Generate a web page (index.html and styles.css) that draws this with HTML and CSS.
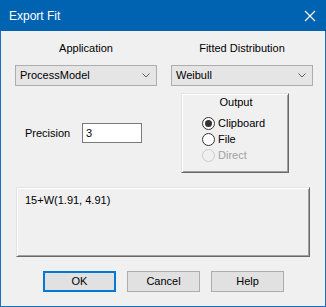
FILE: index.html
```html
<!DOCTYPE html>
<html>
<head>
<meta charset="utf-8">
<link rel="stylesheet" href="styles.css">
</head>
<body>
<div class="window">
  <div class="titlebar">
    <span class="title">Export Fit</span>
    <svg class="close" width="12" height="12" viewBox="0 0 12 12"><path d="M1 1 L11 11 M11 1 L1 11" stroke="#fff" stroke-width="1.1" fill="none"/></svg>
  </div>
  <div class="body">
    <div class="top">
      <div class="field">
        <div class="label">Application</div>
        <div class="combo"><span>ProcessModel</span><svg class="chev" width="8" height="5" viewBox="0 0 8 5"><path d="M0.5 0.5 L4 4 L7.5 0.5" stroke="#606060" stroke-width="1" fill="none"/></svg></div>
      </div>
      <div class="field">
        <div class="label">Fitted Distribution</div>
        <div class="combo"><span>Weibull</span><svg class="chev" width="8" height="5" viewBox="0 0 8 5"><path d="M0.5 0.5 L4 4 L7.5 0.5" stroke="#606060" stroke-width="1" fill="none"/></svg></div>
      </div>
    </div>
    <div class="middle">
      <div class="prec">
        <span class="prec-label">Precision</span>
        <div class="input">3</div>
      </div>
      <div class="group">
        <div class="group-title">Output</div>
        <div class="radios">
          <div class="radio"><span class="dot checked"></span><span>Clipboard</span></div>
          <div class="radio"><span class="dot"></span><span>File</span></div>
          <div class="radio disabled"><span class="dot"></span><span>Direct</span></div>
        </div>
      </div>
    </div>
    <div class="result">15+W(1.91, 4.91)</div>
    <div class="buttons">
      <div class="btn default">OK</div>
      <div class="btn">Cancel</div>
      <div class="btn">Help</div>
    </div>
  </div>
</div>
</body>
</html>
```
FILE: styles.css
```css
html, body {
  margin: 0;
  padding: 0;
  background: #f0f0f0;
}
.window {
  width: 326px;
  height: 307px;
  font-family: "Liberation Sans", Arial, sans-serif;
  font-size: 11px;
  color: #000;
}
.titlebar {
  height: 31px;
  background: #0063b1;
  display: flex;
  align-items: center;
  justify-content: space-between;
  padding: 0 10px 0 9px;
  box-sizing: border-box;
}
.title {
  color: #fff;
  font-size: 12px;
  line-height: 14px;
  padding-top: 1px;
}
.close {
  display: block;
  margin-top: 1px;
}
.body {
  height: 276px;
  box-sizing: border-box;
  border: 1px solid #1a6fbd;
  border-top: none;
  padding: 11px 12px 0 14px;
  background: #f0f0f0;
}
.top {
  display: grid;
  grid-template-columns: 142px 142px;
  column-gap: 14px;
}
.label {
  text-align: center;
  line-height: 13px;
  height: 13px;
  margin-bottom: 10px;
}
.combo {
  height: 21px;
  box-sizing: border-box;
  border: 1px solid #adadad;
  background: #e5e5e5;
  display: flex;
  align-items: center;
  justify-content: space-between;
  padding: 0 6px 0 4px;
  line-height: 13px;
}
.chev {
  display: block;
}
.middle {
  display: flex;
  margin-top: 7px;
}
.prec {
  width: 166px;
  box-sizing: border-box;
  padding-left: 10px;
  display: flex;
  align-items: center;
}
.prec-label {
  width: 57px;
}
.input {
  width: 60px;
  height: 20px;
  box-sizing: border-box;
  border: 1px solid #7a7a7a;
  background: #fff;
  padding-left: 3px;
  line-height: 18px;
}
.group {
  width: 108px;
  height: 80px;
  box-sizing: border-box;
  border: 1px solid;
  border-color: #e3e3e3 #696969 #696969 #e3e3e3;
  box-shadow: inset 1px 1px #ffffff, inset -1px -1px #a0a0a0;
  padding-top: 2px;
}
.group-title {
  text-align: center;
  line-height: 13px;
  padding-left: 2px;
}
.radios {
  margin-top: 6px;
  padding-left: 20px;
}
.radio {
  display: flex;
  align-items: center;
  height: 16px;
}
.dot {
  width: 13px;
  height: 13px;
  box-sizing: border-box;
  border: 1px solid #333;
  border-radius: 50%;
  background: #fff;
  margin-right: 3px;
  position: relative;
}
.dot.checked::after {
  content: "";
  position: absolute;
  left: 2px;
  top: 2px;
  width: 7px;
  height: 7px;
  border-radius: 50%;
  background: #333;
}
.radio.disabled {
  color: #a0a0a0;
}
.radio.disabled .dot {
  border-color: #cccccc;
  background: #f0f0f0;
}
.result {
  margin-top: 14px;
  margin-left: 1px;
  width: 294px;
  height: 70px;
  box-sizing: border-box;
  border: 1px solid;
  border-color: #e3e3e3 #696969 #696969 #e3e3e3;
  box-shadow: inset 1px 1px #ffffff, inset -1px -1px #a0a0a0;
  padding: 6px 0 0 8px;
  line-height: 13px;
}
.buttons {
  display: flex;
  gap: 11px;
  margin-top: 14px;
  padding-left: 28px;
}
.btn {
  width: 73px;
  height: 21px;
  box-sizing: border-box;
  border: 1px solid #adadad;
  background: #e1e1e1;
  display: flex;
  align-items: center;
  justify-content: center;
  line-height: 13px;
}
.btn.default {
  border: 2px solid #0078d7;
}
```
